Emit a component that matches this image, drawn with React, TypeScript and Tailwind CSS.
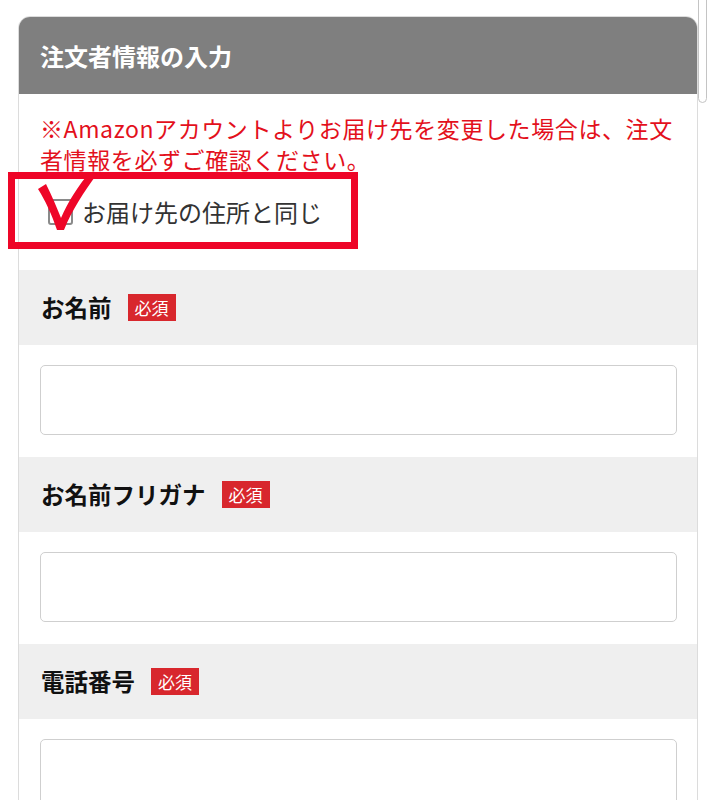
import React from "react";

const font = { fontFamily: '"Noto Sans CJK JP", "Noto Sans", sans-serif' };

function Badge() {
  return (
    <span className="inline-flex items-center justify-center h-[27px] w-[48px] bg-[#d8272d] text-white text-[17px] leading-none">
      必須
    </span>
  );
}

function Field({ label }: { label: string }) {
  return (
    <>
      <div className="h-[75px] bg-[#efefef] flex items-center gap-[16px] px-[22px]">
        <span className="text-[23.5px] font-bold text-[#111] leading-none">{label}</span>
        <Badge />
      </div>
      <div className="pt-[20px] pb-[22px] pl-[21px] pr-[20px]">
        <div className="h-[70px] rounded-[5px] border border-[#cfcfcf] bg-white" />
      </div>
    </>
  );
}

export default function App() {
  return (
    <div className="relative w-[714px] h-[800px] bg-white overflow-hidden" style={font}>
      {/* scrollbar */}
      <div className="absolute left-[698px] top-[-8px] w-[9px] h-[111px] rounded-full border border-[#c4c4c4] bg-white" />

      <div className="ml-[18px] mt-[16px] w-[680px] border border-[#dcdcdc] rounded-t-[12px] overflow-hidden">
        <div className="h-[77px] bg-[#7f7f7f] flex items-center px-[21px]">
          <span className="text-white font-bold text-[24px] leading-none">注文者情報の入力</span>
        </div>

        <div className="relative pt-[19px] pl-[21px] pr-[20px]">
          <p className="text-[#e3101c] text-[23px] leading-[31px] tracking-[0.6px]">
            ※Amazonアカウントよりお届け先を変更した場合は、注文者情報を必ずご確認ください。
          </p>
          <div className="flex items-center h-[46px] mt-[14px] pl-[8px] gap-[9px]">
            <span className="w-[25px] h-[26px] rounded-[3px] border-2 border-[#8a8a8a] bg-white" />
            <span className="text-[24px] text-[#333] leading-none">お届け先の住所と同じ</span>
          </div>
          <div className="h-[35px]" />
        </div>

        <Field label="お名前" />
        <Field label="お名前フリガナ" />
        <Field label="電話番号" />
      </div>

      {/* annotation box */}
      <div className="absolute left-[8px] top-[172px] w-[350px] h-[77px] border-[7px] border-[#ee0628]" />
      {/* annotation check */}
      <svg className="absolute left-0 top-0" width="714" height="800" viewBox="0 0 714 800">
        <path
          d="M38 189 L46 184 C52 196 57 208 61 218 C68 202 78 186 90 172 L97 174 C84 192 72 210 64 230 L57 230 C52 215 45 200 38 189 Z"
          fill="#ee0628"
        />
      </svg>
    </div>
  );
}
